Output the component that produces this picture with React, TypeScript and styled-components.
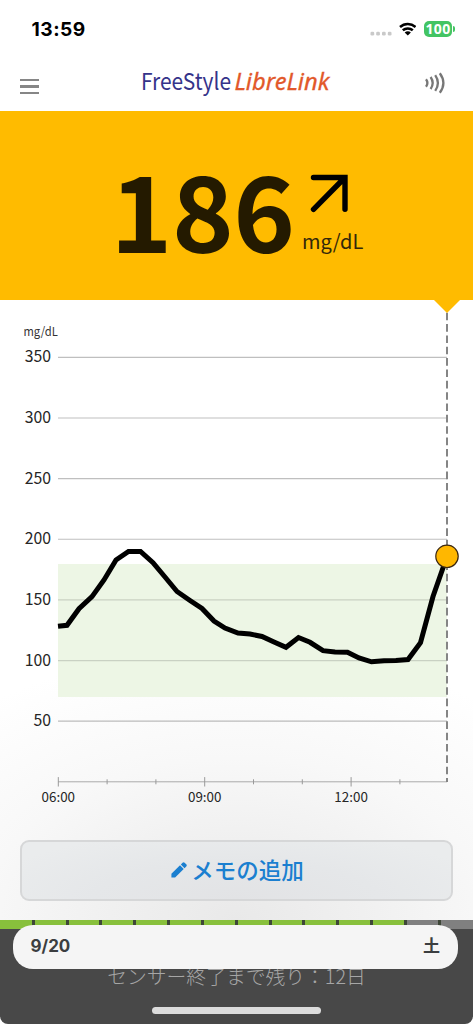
import React from "react";
import styled, { createGlobalStyle } from "styled-components";

const jp = '"Noto Sans CJK JP", "Noto Sans", sans-serif';

const GlobalStyle = createGlobalStyle`
  * { box-sizing: border-box; }
  body { margin: 0; background: #fff; font-family: ${jp}; }
`;

const Screen = styled.div`
  position: relative;
  width: 473px;
  height: 1024px;
  overflow: hidden;
  display: flex;
  flex-direction: column;
  background: #fff;
`;

const StatusBar = styled.header`
  height: 58px;
  padding: 0 18px 0 31.5px;
  display: flex;
  justify-content: space-between;
  align-items: center;
`;

const Clock = styled.span`
  font: 700 19.2px/24px Inter, sans-serif;
  letter-spacing: 0.5px;
  color: #000;
`;

const StatusIcons = styled.div`
  display: flex;
  align-items: center;
`;

const Battery = styled.span`
  width: 28px;
  height: 16px;
  margin-left: 8px;
  border-radius: 5px;
  background: #43c463;
  color: #fff;
  font: 700 14px/16px "Noto Sans", sans-serif;
  letter-spacing: 0.4px;
  text-align: center;
`;

const BatteryTip = styled.span`
  width: 2px;
  height: 6px;
  margin-left: 1px;
  border-radius: 0 2px 2px 0;
  background: #43c463;
`;

const NavBar = styled.nav`
  height: 53px;
  padding: 0 27px 0 20px;
  display: flex;
  justify-content: space-between;
`;

const Menu = styled.div`
  width: 19px;
  padding-top: 21px;
  display: flex;
  flex-direction: column;
  gap: 4px;
`;

const MenuLine = styled.span`
  height: 2.3px;
  background: #868686;
`;

const Brand = styled.svg`
  margin: 3px 0 0 10px;
`;

const Reading = styled.section`
  height: 189px;
  padding-left: 110.5px;
  display: flex;
  background: #ffbb00;
`;

const Glucose = styled.div`
  width: 185.5px;
  padding-top: 43px;
  font: 700 104.8px/106px ${jp};
  letter-spacing: -0.4px;
  color: #241a00;
`;

const Trend = styled.div`
  padding: 62px 0 0 6px;
  display: flex;
  flex-direction: column;
`;

const Unit = styled.span`
  margin-top: 13px;
  font-size: 20px;
  line-height: 26px;
  color: #33270a;
`;

const ChartArea = styled.section`
  height: 620px;
  display: flex;
  flex-direction: column;
  background: radial-gradient(ellipse 420px 270px at 50% 100%, #e9e9e9 0%, #f0f0f0 30%, #f8f8f8 60%, #fff 100%);
`;

const NoteButton = styled.button`
  width: 433px;
  height: 61px;
  margin: 0 0 0 20px;
  padding: 0 0 4px 2px;
  display: flex;
  align-items: center;
  justify-content: center;
  gap: 4px;
  border: 2px solid #d6d7d8;
  border-radius: 9px;
  background: radial-gradient(ellipse 260px 70px at 50% 100%, #e2e3e5, #e5e7e9 55%, #eaeced);
  color: #1b7fd0;
  font: 500 22.5px/30px ${jp};
`;

const PencilIcon = styled.svg`
  margin-top: 3px;
`;

const Footer = styled.footer`
  height: 104px;
  border-radius: 0 0 8px 8px;
  background: #484848;
  display: flex;
  flex-direction: column;
  align-items: center;
`;

const Progress = styled.div`
  width: 473px;
  height: 9px;
  display: flex;
`;

const Segment = styled.span<{ $used?: boolean; $width?: number }>`
  flex: 0 0 ${(p) => p.$width ?? 33.85}px;
  border-right: 3px solid #3e4738;
  background: ${(p) => (p.$used ? "#88c03c" : "#808080")};
`;

const Remainder = styled.span`
  flex: 1;
  background: #808080;
`;

const SensorText = styled.div`
  margin-top: 32px;
  font-size: 19.8px;
  font-weight: 300;
  line-height: 30px;
  color: #a6a6a6;
  white-space: nowrap;
`;

const HomeIndicator = styled.span`
  width: 169px;
  height: 6.5px;
  margin-top: 16px;
  border-radius: 4px;
  background: #dcdcdc;
`;

const DateBar = styled.div`
  position: absolute;
  left: 12.5px;
  top: 925px;
  width: 445.5px;
  height: 43.5px;
  padding: 0 18px 1px 18px;
  border-radius: 20px;
  display: flex;
  align-items: center;
  justify-content: space-between;
  background: #f5f5f5;
  color: #3b3e40;
  font: 700 17px/24px Inter, ${jp};
`;

const readings: [number, number][] = [
  [58, 626.3], [67, 625.3], [79, 608.7], [92, 596.7], [104, 580], [116, 560],
  [128.5, 551.5], [140.5, 551.5], [153, 562.7], [165, 577], [177, 591.5],
  [190, 600.5], [202, 608.5], [214, 621], [225, 628], [238, 633], [250, 634],
  [262, 636.5], [274, 642], [286, 647.3], [298.5, 637.5], [310, 642.3],
  [323, 650.7], [335, 652], [347.5, 652.3], [359, 658], [371.5, 661.8],
  [384, 660.7], [396, 660.5], [408, 659.5], [420.5, 642.7], [433, 596.5],
  [447, 556.5],
];

const levels = [350, 300, 250, 200, 150, 100, 50];
const levelY = (v: number) => 781.8 - v * 1.2127;
const hourX = (h: number) => 58.3 + (h - 6) * 48.8;

function Logo() {
  return (
    <Brand width="196" height="44" viewBox="-2 -6 196 44">
      <text x="0" y="23" fontFamily={jp} fontSize="23.5" fill="#35338a" textLength="90" lengthAdjust="spacingAndGlyphs">FreeStyle</text>
      <text x="93.5" y="23.3" fontFamily="Noto Sans, sans-serif" fontStyle="italic" fontSize="24" fill="#e2582a" stroke="#e2582a" strokeWidth="0.3" textLength="95" lengthAdjust="spacingAndGlyphs">LibreLink</text>
    </Brand>
  );
}

function GlucoseChart() {
  return (
    <svg width="473" height="540" viewBox="0 300 473 540" fontFamily={jp}>
      <rect x="58" y="564" width="389" height="133" fill="#edf6e5" />
      <text x="23.5" y="336" fontSize="12.4" fill="#333" textLength="34.3" lengthAdjust="spacingAndGlyphs">mg/dL</text>
      {levels.map((v) => (
        <g key={v}>
          <line x1="58" x2="447" y1={levelY(v)} y2={levelY(v)} stroke="#000" strokeOpacity={v === 100 || v === 150 ? 0.15 : 0.25} strokeWidth="1.2" />
          <text x="51" y={levelY(v) + 5} fontSize="15.8" textAnchor="end" fill="#262626">{v}</text>
        </g>
      ))}
      <line x1="58" x2="447" y1="781.8" y2="781.8" stroke="#aaa" />
      {[6, 7, 8, 9, 10, 11, 12, 13].map((h) => {
        const r = h % 3 === 0 ? 4.7 : 2.5;
        return <line key={h} x1={hourX(h)} x2={hourX(h)} y1={781.8 - r} y2={781.8 + r} stroke="#999" />;
      })}
      {[6, 9, 12].map((h) => (
        <text key={h} x={hourX(h)} y="802.3" fontSize="13.4" textAnchor="middle" fill="#262626">
          {String(h).padStart(2, "0")}:00
        </text>
      ))}
      <line x1="447" x2="447" y1="312.7" y2="782" stroke="#858585" strokeWidth="2" strokeDasharray="7.6 3.75" />
      <path d="M434 300h26l-13 13z" fill="#ffbb00" />
      <polyline points={readings.map((p) => p.join(",")).join(" ")} fill="none" stroke="#000" strokeWidth="5" />
      <circle cx="447" cy="556.3" r="11.2" fill="#ffb700" stroke="#3a2712" strokeWidth="1.2" />
    </svg>
  );
}

export default function App() {
  return (
    <Screen>
      <GlobalStyle />
      <StatusBar>
        <Clock>13:59</Clock>
        <StatusIcons>
          <svg width="50" height="20" viewBox="0 0 50 20">
            <g fill="#c9c9c9">
              {[4.5, 10.2, 16, 21.8].map((x) => (
                <rect key={x} x={x} y="12.8" width="3.7" height="3.7" rx="1.3" />
              ))}
            </g>
            <g transform="translate(32.8 2.8)">
              <path d="M1.2 5.2a11.6 11.6 0 0 1 15.6 0M4 8.5a7.5 7.5 0 0 1 10 0" fill="none" stroke="#000" strokeWidth="2.5" />
              <path d="M5.9 10.7a4.8 4.8 0 0 1 6.2 0L9 13.8z" fill="#000" />
            </g>
          </svg>
          <Battery>100</Battery>
          <BatteryTip />
        </StatusIcons>
      </StatusBar>
      <NavBar>
        <Menu><MenuLine /><MenuLine /><MenuLine /></Menu>
        <Logo />
        <svg width="22" height="24" viewBox="0 0 22 24" style={{ marginTop: 13 }} fill="none" stroke="#777" strokeWidth="2.3">
          <path d="M2 8.2q2.8 3.8 0 7.6M6.6 6q4.2 6 0 12M11.2 4.2q5.4 7.8 0 15.6M15.8 2.2q7.2 9.8 0 19.6" />
        </svg>
      </NavBar>
      <Reading>
        <Glucose>186</Glucose>
        <Trend>
          <svg width="50" height="42" viewBox="0 0 50 42" fill="none" stroke="#000" strokeWidth="5.4" strokeLinecap="round" strokeLinejoin="miter">
            <path d="M11.5 4.5H43V36.3M11.5 36.3L42 5.5" />
          </svg>
          <Unit>mg/dL</Unit>
        </Trend>
      </Reading>
      <ChartArea>
        <GlucoseChart />
        <NoteButton>
          <PencilIcon width="16" height="16" viewBox="2.5 2.5 19 19" fill="currentColor">
            <path d="M3 16.6V21h4.4L17.6 10.8l-4.4-4.4zM20.6 7.8a1.8 1.8 0 0 0 0-2.5l-1.9-1.9a1.8 1.8 0 0 0-2.5 0l-2 2 4.4 4.4z" />
          </PencilIcon>
          メモの追加
        </NoteButton>
      </ChartArea>
      <Footer>
        <Progress>
          <Segment $used $width={34.7} />
          {Array.from({ length: 11 }, (_, i) => <Segment key={i} $used />)}
          <Segment />
          <Remainder />
        </Progress>
        <SensorText>センサー終了まで残り：12日</SensorText>
        <HomeIndicator />
      </Footer>
      <DateBar><span>9/20</span><span>土</span></DateBar>
    </Screen>
  );
}
